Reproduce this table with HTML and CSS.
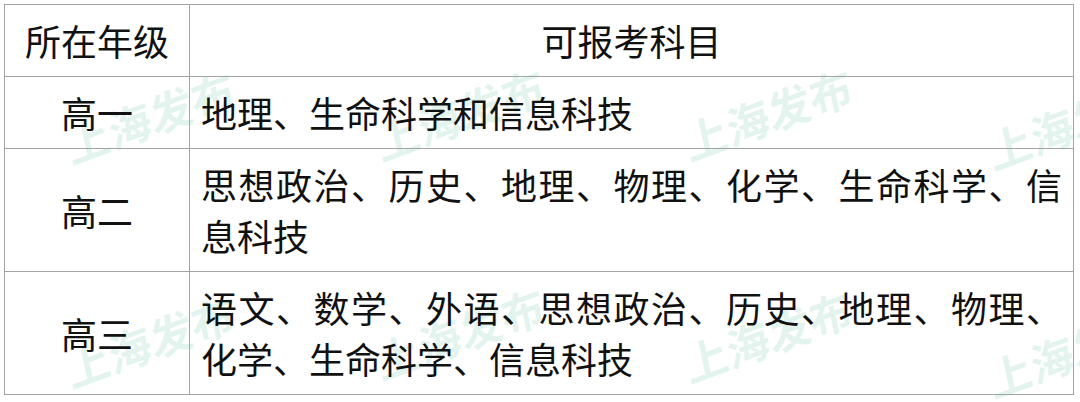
FILE: index.html
```html
<!DOCTYPE html>
<html lang="zh-CN">
<head>
<meta charset="utf-8">
<title>可报考科目</title>
<link rel="stylesheet" href="styles.css">
</head>
<body>
<div class="page">
  <div class="marks" aria-hidden="true">
    <span class="mark m1">上海发布</span>
    <span class="mark m2">上海发布</span>
    <span class="mark m3">上海发布</span>
    <span class="mark m4">上海发布</span>
    <span class="mark m5">上海发布</span>
    <span class="mark m6">上海发布</span>
    <span class="mark m7">上海发布</span>
    <span class="mark m8">上海发布</span>
  </div>
  <table class="grid">
    <colgroup>
      <col class="c-grade">
      <col class="c-subj">
    </colgroup>
    <thead>
      <tr>
        <th class="grade">所在年级</th>
        <th class="head-subj">可报考科目</th>
      </tr>
    </thead>
    <tbody>
      <tr>
        <td class="grade">高一</td>
        <td class="subj">地理、生命科学和信息科技</td>
      </tr>
      <tr>
        <td class="grade">高二</td>
        <td class="subj">思想政治、历史、地理、物理、化学、生命科学、信息科技</td>
      </tr>
      <tr>
        <td class="grade">高三</td>
        <td class="subj">语文、数学、外语、思想政治、历史、地理、物理、化学、生命科学、信息科技</td>
      </tr>
    </tbody>
  </table>
</div>
</body>
</html>
```

FILE: styles.css
```css
html, body {
  margin: 0;
  padding: 0;
  background: #ffffff;
}

.page {
  position: relative;
  padding: 4px 0 0 4px;
  width: 1080px;
  height: 402px;
  box-sizing: border-box;
  overflow: hidden;
  font-family: "Noto Sans CJK SC", "Noto Sans", sans-serif;
  color: #111111;
}

.marks {
  position: absolute;
  inset: 0;
  z-index: 0;
  pointer-events: none;
}

.mark {
  position: absolute;
  font-family: "Noto Sans CJK SC", sans-serif;
  font-weight: 700;
  font-size: 44px;
  line-height: 1;
  white-space: nowrap;
  color: rgba(110, 200, 170, 0.19);
  transform: translate(-50%, -50%) rotate(-20deg) skewX(-8deg);
}

.m1 { left: 150px; top: 116px; }
.m2 { left: 460px; top: 113px; }
.m3 { left: 768px; top: 113px; }
.m4 { left: 1072px; top: 122px; }
.m5 { left: 150px; top: 340px; }
.m6 { left: 460px; top: 332px; }
.m7 { left: 768px; top: 335px; }
.m8 { left: 1072px; top: 350px; }

.grid {
  position: relative;
  z-index: 1;
  border-collapse: collapse;
  table-layout: fixed;
  width: 1069px;
  background: transparent;
}

.c-grade { width: 185px; }
.c-subj { width: 884px; }

.grid th,
.grid td {
  border: 1px solid #a3a3a3;
  padding: 10px 11px;
  font-size: 36px;
  line-height: 51px;
  font-weight: 400;
  vertical-align: middle;
}

.grade {
  text-align: center;
}

.head-subj {
  text-align: center;
}

.subj {
  text-align: justify;
}
```
